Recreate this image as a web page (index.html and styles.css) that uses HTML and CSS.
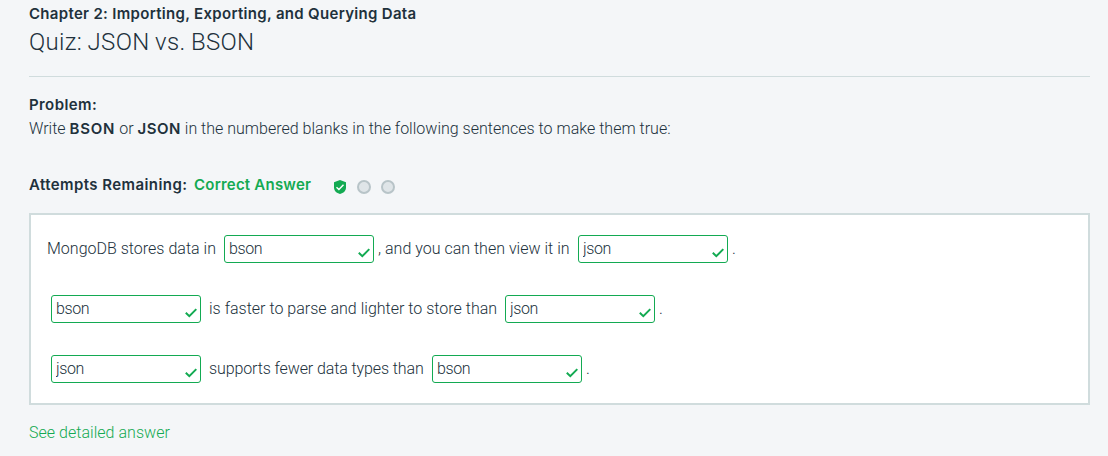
FILE: index.html
```
<!DOCTYPE html>
<html lang="en">
<head>
<meta charset="utf-8">
<title>Quiz: JSON vs. BSON</title>
<link rel="stylesheet" href="styles.css">
</head>
<body>
<svg class="symbols" aria-hidden="true">
  <symbol id="check" viewBox="0 0 12 10"><path d="M.8 4.800 4.300 8.200 11.300 1.100" fill="none" stroke="currentColor" stroke-width="2"/></symbol>
</svg>
<main class="quiz">
  <header class="quiz-header">
    <h2 class="chapter">Chapter 2: Importing, Exporting, and Querying Data</h2>
    <h1 class="title">Quiz: JSON vs. BSON</h1>
  </header>
  <section class="problem">
    <h3 class="label problem-label">Problem:</h3>
    <p class="prompt">Write <b class="bson">BSON</b> or <b>JSON</b> in the numbered blanks in the following sentences to make them true:</p>
  </section>
  <div class="attempts">
    <span class="label attempts-label">Attempts Remaining:</span>
    <span class="label result">Correct Answer</span>
    <span class="marks">
      <svg class="shield" viewBox="0 0 12 14"><path d="M6 0 12 2.200V7.500c0 3.200-2.500 5.700-6 6.500C2.500 13.200 0 10.700 0 7.500V2.200Z" fill="#13aa52"/><path d="M2.500 7.300 4.900 9.600 9.500 4.800" fill="none" stroke="#fff" stroke-width="1.400"/></svg>
      <i class="dot"></i>
      <i class="dot"></i>
    </span>
  </div>
  <section class="answers">
    <div class="sentence">
      <span class="text stores">MongoDB stores data in</span>
      <span class="blank"><input type="text" value="bson"><svg class="check"><use href="#check"/></svg></span>
      <span class="text view">, and you can then view it in</span>
      <span class="blank"><input type="text" value="json"><svg class="check"><use href="#check"/></svg></span>
      <span class="text">.</span>
    </div>
    <div class="sentence lead-blank">
      <span class="blank"><input type="text" value="bson"><svg class="check"><use href="#check"/></svg></span>
      <span class="text faster">is faster to parse and lighter to store than</span>
      <span class="blank"><input type="text" value="json"><svg class="check"><use href="#check"/></svg></span>
      <span class="text">.</span>
    </div>
    <div class="sentence lead-blank">
      <span class="blank"><input type="text" value="json"><svg class="check"><use href="#check"/></svg></span>
      <span class="text types">supports fewer data types than</span>
      <span class="blank"><input type="text" value="bson"><svg class="check"><use href="#check"/></svg></span>
      <span class="text">.</span>
    </div>
  </section>
  <a class="details">See detailed answer</a>
</main>
</body>
</html>
```
FILE: styles.css
```
* { box-sizing: border-box; }
body {
  margin: 0;
  height: 456px;
  overflow: hidden;
  background: #f4f6f8;
  color: #21313c;
  font: 300 16px/24px Roboto, "Liberation Sans", sans-serif;
}
h1, h2, h3, p { margin: 0; }
.symbols { display: none; }
.quiz { padding: 2px 18px 0 29px; }
.quiz-header { height: 75px; border-bottom: 1px solid #d0dcdd; white-space: nowrap; }
.chapter, .label, .prompt b {
  font-family: Inter, "Liberation Sans", sans-serif;
  font-size: 15px;
  font-weight: 600;
  line-height: 24px;
}
.chapter { letter-spacing: .31px; }
.title { font-size: 24px; font-weight: 300; line-height: 32px; letter-spacing: .3px; word-spacing: -.6px; }
.problem { padding-top: 16px; }
.problem-label { letter-spacing: .4px; }
.prompt { white-space: nowrap; letter-spacing: .01px; }
.prompt b { letter-spacing: .5px; }
.prompt .bson { letter-spacing: .8px; }
.attempts { display: flex; margin-top: 32px; height: 24px; }
.attempts-label { width: 165px; white-space: nowrap; letter-spacing: .42px; }
.result { width: 140px; color: #13aa52; white-space: nowrap; letter-spacing: .22px; }
.marks { display: flex; align-items: center; gap: 10px; padding-top: 4px; }
.shield { width: 12px; height: 14px; margin-right: 1px; }
.dot { width: 14px; height: 14px; border: 2px solid #b8c4c8; border-radius: 50%; background: #dfe5e8; }
.answers {
  display: flex;
  flex-direction: column;
  gap: 32px;
  height: 192px;
  margin-top: 16px;
  padding: 20px 16px;
  border: 2px solid #d0dcdd;
  background: #fff;
}
.sentence { display: flex; height: 28px; }
.lead-blank { padding-left: 4px; }
.text { line-height: 28px; white-space: nowrap; letter-spacing: .01px; }
.blank { position: relative; width: 150px; height: 28px; flex: none; margin-right: 4px; }
.blank input {
  width: 100%;
  height: 100%;
  padding: 0 4px 1px;
  border: 1px solid #13aa52;
  border-radius: 3px;
  background: #fff;
  color: #21313c;
  font: inherit;
  letter-spacing: -.4px;
}
.check { position: absolute; right: 4px; bottom: 5px; width: 12px; height: 10px; color: #13aa52; }
.stores { width: 177px; }
.view { width: 200px; }
.faster { width: 300px; padding-left: 4px; }
.types { width: 227px; padding-left: 4px; letter-spacing: -.11px; }
.details { display: block; margin-top: 16px; color: #13aa52; letter-spacing: .03px; }
```
